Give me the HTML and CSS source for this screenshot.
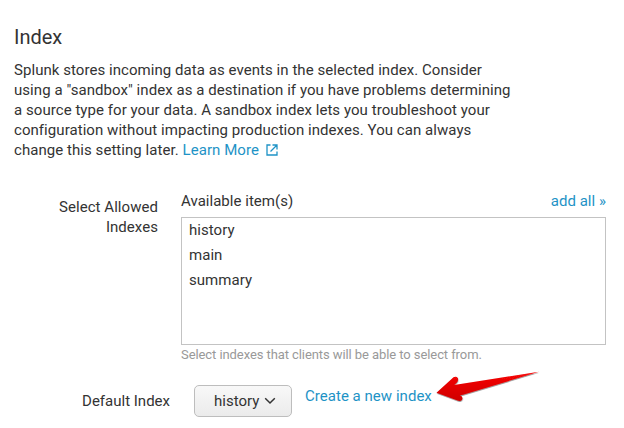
FILE: index.html
```html
<!DOCTYPE html>
<html lang="en">
<head>
<meta charset="utf-8">
<title>Index</title>
<link rel="stylesheet" href="styles.css">
</head>
<body>
<main class="page">
  <h1 class="title">Index</h1>
  <p class="intro">Splunk stores incoming data as events in the selected index. Consider<br>using a "sandbox" index as a destination if you have problems determining<br>a source type for your data. A sandbox index lets you troubleshoot your<br>configuration without impacting production indexes. You can always<br>change this setting later. <a class="link">Learn More<svg class="external" width="12" height="12" viewBox="0 0 12 12"><path d="M4.500 1H1V11H11V7.500M6.500 1H11V5.500M11 1L4.500 7.500"/></svg></a></p>
  <div class="row">
    <div class="label allowed">Select Allowed<br>Indexes</div>
    <div class="picker">
      <div class="picker-head"><span>Available item(s)</span><a class="link">add all »</a></div>
      <ul class="items"><li>history</li><li>main</li><li>summary</li></ul>
      <div class="help">Select indexes that clients will be able to select from.</div>
    </div>
  </div>
  <div class="row default-row">
    <div class="label default-label">Default Index</div>
    <button class="select"><span>history</span><svg width="12" height="8" viewBox="0 0 12 8"><path d="M1.2 1.3L6 6L10.8 1.3"/></svg></button>
    <a class="link create">Create a new index</a>
  </div>
  <svg class="arrow" width="114" height="44" viewBox="0 0 114 44">
    <defs>
      <linearGradient id="red" x1="0" y1="0" x2="0" y2="1"><stop offset="0" stop-color="#f80808"/><stop offset="1" stop-color="#cf0000"/></linearGradient>
      <filter id="shade" x="-10%" y="-20%" width="120%" height="150%"><feDropShadow dx="0.3" dy="0.8" stdDeviation="0.6" flood-color="#000" flood-opacity=".5"/></filter>
    </defs>
    <path fill="url(#red)" filter="url(#shade)" d="M3.500 26.800L20.500 11.300Q23 9.800 24.800 12Q25.700 14.300 23.700 16.800L21.200 19L106 5.800L30 28.700L27 29.200Q30.500 31 29 33.700Q27.500 35.500 24.500 34.600Z"/>
  </svg>
</main>
</body>
</html>
```
FILE: styles.css
```css
* { box-sizing: border-box; }
body { margin: 0; background: #fff; color: #333; font: 15px/20px Roboto, "Liberation Sans", sans-serif; }
.page { position: relative; width: 624px; height: 428px; padding: 25px 18px 0 14px; overflow: hidden; }
.title { margin: 0; font-size: 20px; line-height: 24px; font-weight: 400; }
.intro { margin: 11px 0 0; white-space: nowrap; letter-spacing: 0.055px; }
.link { color: #1e93c6; }
.external { margin-left: 7px; vertical-align: -1px; fill: none; stroke: currentColor; stroke-width: 1.3; }
.row { display: flex; align-items: flex-start; }
.row:first-of-type { margin-top: 31px; }
.label { width: 144px; text-align: right; }
.allowed { padding-top: 6px; letter-spacing: 0.05px; }
.picker { width: 425px; margin-left: 23px; }
.picker-head { display: flex; justify-content: space-between; letter-spacing: 0.03px; }
.items { height: 128px; margin: 6px 0 0; padding: 0 7px; border: 1px solid #c3c3c3; list-style: none; line-height: 25px; letter-spacing: 0.05px; }
.help { height: 20px; color: #999; font-size: 13px; letter-spacing: -0.08px; }
.default-row { margin-top: 20px; }
.default-label { width: 156px; padding-top: 6px; }
.select { display: flex; align-items: center; width: 98px; height: 32px; margin-left: 24px; padding: 0 15px 0 19px; justify-content: space-between; border: 1px solid #bdbdbd; border-radius: 5px; color: #333; background: linear-gradient(#f8f8f8, #ebebeb); font: inherit; }
.select svg { fill: none; stroke: #333; stroke-width: 1.5; }
.create { margin: 1px 0 0 13px; letter-spacing: 0.03px; }
.arrow { position: absolute; left: 433px; top: 366px; }
```
